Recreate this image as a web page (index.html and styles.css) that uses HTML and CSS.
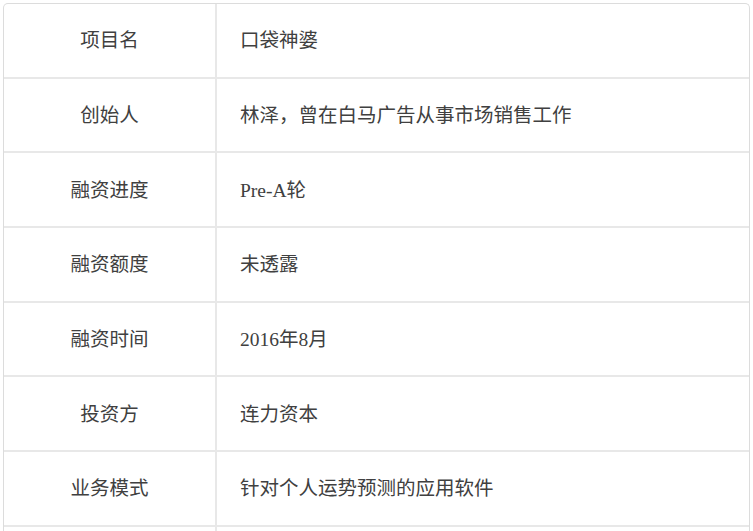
FILE: index.html
```html
<!DOCTYPE html>
<html lang="zh-CN">
<head>
<meta charset="utf-8">
<link rel="stylesheet" href="styles.css">
</head>
<body>
<div class="table">
  <div class="row"><div class="label">项目名</div><div class="value">口袋神婆</div></div>
  <div class="row"><div class="label">创始人</div><div class="value">林泽，曾在白马广告从事市场销售工作</div></div>
  <div class="row"><div class="label">融资进度</div><div class="value">Pre-A轮</div></div>
  <div class="row"><div class="label">融资额度</div><div class="value">未透露</div></div>
  <div class="row"><div class="label">融资时间</div><div class="value">2016年8月</div></div>
  <div class="row"><div class="label">投资方</div><div class="value">连力资本</div></div>
  <div class="row"><div class="label">业务模式</div><div class="value">针对个人运势预测的应用软件</div></div>
  <div class="row last"><div class="label"></div><div class="value"></div></div>
</div>
</body>
</html>
```
FILE: styles.css
```css
html, body {
  margin: 0;
  padding: 0;
  background: #ffffff;
  overflow: hidden;
}
body {
  padding: 3px 3px 0 3px;
  height: 531px;
  box-sizing: border-box;
}
.table {
  width: 747px;
  border: 1px solid #dcdcdc;
  border-bottom: none;
  border-radius: 5px 5px 0 0;
  box-sizing: border-box;
  font-family: "Liberation Serif", "Noto Sans CJK SC", serif;
  font-size: 19.5px;
  color: #404040;
}
.row {
  display: flex;
  height: 74.67px;
  border-bottom: 2px solid #e8e8e8;
  box-sizing: border-box;
}
.row.last {
  height: 4px;
  border-bottom: none;
}
.label {
  width: 213px;
  flex: none;
  display: flex;
  align-items: center;
  justify-content: center;
  padding-bottom: 3px;
  box-sizing: border-box;
  border-right: 2px solid #e8e8e8;
}
.value {
  flex: 1;
  display: flex;
  align-items: center;
  padding-left: 23px;
  padding-bottom: 3px;
}
```
